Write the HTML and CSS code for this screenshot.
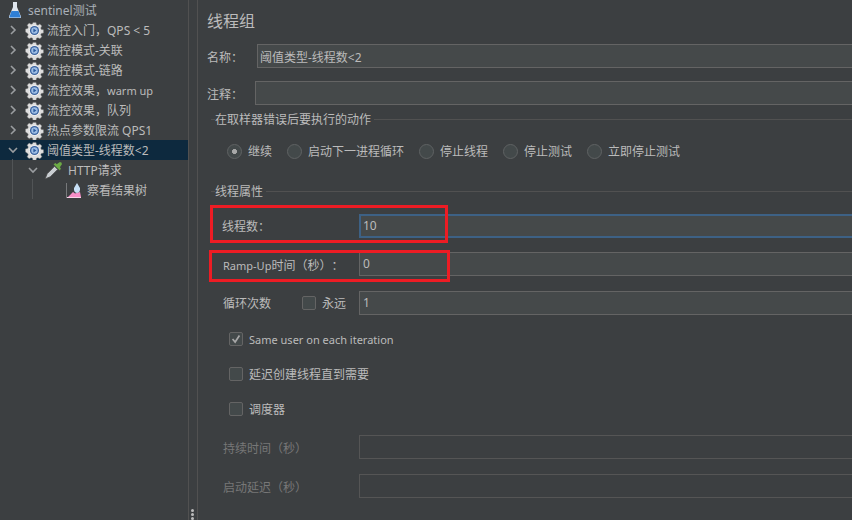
FILE: index.html
```html
<!DOCTYPE html>
<html>
<head>
<meta charset="utf-8">
<title>线程组</title>
<link rel="stylesheet" href="styles.css">
</head>
<body>
<svg class="defs" width="0" height="0">
	<symbol id="gear" viewBox="0 0 20 20">
		<path d="M8.3 1h3.4l.5 2.4 1.6.7 2.1-1.3 2.3 2.3-1.3 2.1.7 1.6 2.4.5v3.4l-2.4.5-.7 1.6 1.3 2.1-2.3 2.3-2.1-1.3-1.6.7-.5 2.4H8.3l-.5-2.4-1.6-.7-2.1 1.3-2.3-2.3 1.3-2.1-.7-1.6L0 11.7V8.3l2.4-.5.7-1.6-1.3-2.1 2.3-2.3 2.1 1.3 1.6-.7z" transform="translate(.5 .5) scale(.95)" fill="#dedede" stroke="#777" stroke-width=".5"/>
		<circle cx="10" cy="10" r="5.600" fill="#f2f2f2"/>
		<circle cx="10" cy="10" r="4.800" fill="#38619e"/>
		<circle cx="10" cy="10" r="3.400" fill="#9dbde4"/>
		<path d="M8.800 8v4l3.200-2z" fill="#2c5c9e"/>
	</symbol>
</svg>
<div class="app">
	<div class="tree">
		<div class="node root">
			<svg class="flask" viewBox="0 0 14 18"><path d="M5 1h4v5l4 9.5q.4 1.5-1 1.5H2q-1.4 0-1-1.500L5 6z" fill="#dfe6ee"/><path d="M3.500 10h7l2 5.500q.3 1-.7 1H2.200q-1 0-.7-1z" fill="#2f7fd6"/></svg>
			<span>sentinel测试</span>
		</div>
		<div class="node"><svg class="arrow" viewBox="0 0 10 10"><path d="M3 1l4 4-4 4"/></svg><svg class="gear"><use href="#gear"/></svg><span>流控入门，QPS &lt; 5</span></div>
		<div class="node"><svg class="arrow" viewBox="0 0 10 10"><path d="M3 1l4 4-4 4"/></svg><svg class="gear"><use href="#gear"/></svg><span>流控模式-关联</span></div>
		<div class="node"><svg class="arrow" viewBox="0 0 10 10"><path d="M3 1l4 4-4 4"/></svg><svg class="gear"><use href="#gear"/></svg><span>流控模式-链路</span></div>
		<div class="node"><svg class="arrow" viewBox="0 0 10 10"><path d="M3 1l4 4-4 4"/></svg><svg class="gear"><use href="#gear"/></svg><span>流控效果，<small>warm up</small></span></div>
		<div class="node"><svg class="arrow" viewBox="0 0 10 10"><path d="M3 1l4 4-4 4"/></svg><svg class="gear"><use href="#gear"/></svg><span>流控效果，队列</span></div>
		<div class="node"><svg class="arrow" viewBox="0 0 10 10"><path d="M3 1l4 4-4 4"/></svg><svg class="gear"><use href="#gear"/></svg><span>热点参数限流 QPS1</span></div>
		<div class="node selected"><svg class="arrow" viewBox="0 0 10 10"><path d="M1 3l4 4 4-4"/></svg><svg class="gear"><use href="#gear"/></svg><span>阈值类型-线程数&lt;2</span></div>
		<div class="node level2"><svg class="arrow" viewBox="0 0 10 10"><path d="M1 3l4 4 4-4"/></svg><svg class="dropper" viewBox="0 0 18 18"><path d="M1 17l2-5 7-7 3 3-7 7z" fill="#c9ced2" stroke="#4a4a4a" stroke-width=".8"/><path d="M9 3l6 6 1-2-1-1 2-3q0-2-2-2l-3 2-1-1z" fill="#6cab45"/></svg><span>HTTP请求</span></div>
		<div class="node level3"><svg class="graph" viewBox="0 0 16 15"><path d="M.5 0v15" stroke="#77797b"/><path d="M2 14l5-5 2 1.500 5-1.500 1 5z" fill="#f78fc8"/><path d="M11 0l3 5q.5 4.500-3 5-3.500-.5-3-5z" fill="#c6dff5"/><path d="M1 14.500h14" stroke="#f9d3e8"/></svg><span>察看结果树</span></div>
		<div class="guide guide1"></div>
		<div class="guide guide2"></div>
	</div>
	<div class="sash"><div class="grip"><i></i><i></i><i></i></div></div>
	<div class="panel">
		<div class="title">线程组</div>
		<div class="row name-row"><label class="name-label">名称：</label><div class="field">阈值类型-线程数&lt;2</div></div>
		<div class="row comment-row"><label class="name-label">注释：</label><div class="field comment"></div></div>
		<div class="legend legend-action"><span>在取样器错误后要执行的动作</span></div>
		<div class="radios">
			<div class="radio on"><i></i><span>继续</span></div>
			<div class="radio"><i></i><span>启动下一进程循环</span></div>
			<div class="radio"><i></i><span>停止线程</span></div>
			<div class="radio"><i></i><span>停止测试</span></div>
			<div class="radio"><i></i><span>立即停止测试</span></div>
		</div>
		<div class="legend legend-props"><span>线程属性</span></div>
		<div class="row threads-row"><label class="prop-label">线程数：</label><div class="field focus">10</div></div>
		<div class="row ramp-row"><label class="prop-label"><small>Ramp-Up</small>时间（秒）：</label><div class="field">0</div></div>
		<div class="row loop-row">
			<label class="loop-label">循环次数</label>
			<div class="check"><i></i><span>永远</span></div>
			<div class="field">1</div>
		</div>
		<div class="check option first"><i class="tick"><svg viewBox="0 0 14 14"><path d="M3 7l3 3.500L11 3"/></svg></i><span><small>Same user on each iteration</small></span></div>
		<div class="check option"><i></i><span>延迟创建线程直到需要</span></div>
		<div class="check option"><i></i><span>调度器</span></div>
		<div class="row off duration-row"><label class="prop-label">持续时间（秒）</label><div class="field"></div></div>
		<div class="row off delay-row"><label class="prop-label">启动延迟（秒）</label><div class="field"></div></div>
		<div class="mark mark-threads"></div>
		<div class="mark mark-ramp"></div>
	</div>
</div>
</body>
</html>
```
FILE: styles.css
```css
html, body {
	margin: 0;
	height: 100%;
	overflow: hidden;
}
body {
	background-color: #3c3f41;
	color: #bbbbbb;
	font-family: "Noto Sans", "Noto Sans CJK SC", sans-serif;
	font-size: 12px;
	text-spacing-trim: space-all;
}
small {
	font-size: 11px;
}
.defs {
	position: absolute;
}
.app {
	display: flex;
	width: 852px;
	height: 520px;
}

/* left tree */
.tree {
	position: relative;
	width: 188px;
	flex: none;
}
.node {
	display: flex;
	align-items: center;
	height: 20px;
	padding-left: 8px;
	white-space: nowrap;
}
.node span {
	margin-left: 3px;
}
.root span {
	margin-left: 6px;
	color: #a9b0b8;
}
.selected {
	background-color: #0d293e;
}
.arrow {
	width: 10px;
	height: 10px;
	margin-right: 4px;
	fill: none;
	stroke: #9a9da0;
	stroke-width: 1.6;
}
.gear {
	width: 19px;
	height: 19px;
	margin-left: 3px;
}
.flask {
	width: 14px;
	height: 18px;
}
.level2 {
	padding-left: 28px;
}
.dropper {
	width: 19px;
	height: 19px;
	margin-left: 2px;
}
.level2 span {
	margin-left: 5px;
}
.level3 {
	padding-left: 66px;
}
.graph {
	width: 16px;
	height: 15px;
}
.level3 span {
	margin-left: 5px;
}
.guide {
	position: absolute;
	width: 1px;
	background-color: #515456;
}
.guide1 {
	left: 12px;
	top: 159px;
	height: 40px;
}
.guide2 {
	left: 32px;
	top: 179px;
	height: 20px;
}

/* divider */
.sash {
	position: relative;
	width: 8px;
	flex: none;
	border-left: 1px solid #515151;
	border-right: 1px solid #515151;
}
.grip {
	position: absolute;
	left: 2px;
	bottom: 0;
	display: flex;
	flex-direction: column;
	gap: 1px;
}
.grip i {
	width: 3px;
	height: 3px;
	border-radius: 50%;
	background-color: #bbbbbb;
}

/* right panel */
.panel {
	position: relative;
	flex: 1;
	padding-left: 9px;
	min-width: 0;
}
.title {
	height: 22px;
	margin-top: 10px;
	margin-bottom: 12px;
	font-size: 16px;
	line-height: 22px;
}
.row {
	display: flex;
	align-items: center;
}
.field {
	flex: 1;
	box-sizing: border-box;
	height: 24px;
	padding-left: 3px;
	border: 1px solid #646464;
	border-right: 0;
	background-color: #45494a;
	line-height: 22px;
}
.name-row {
	margin-top: 11px;
}
.name-label {
	width: 50px;
	flex: none;
	padding-top: 2px;
}
.name-row .field {
	padding-left: 2px;
	line-height: 25px;
}
.comment-row {
	margin-top: 13px;
}
.comment-row .name-label {
	width: 48px;
}
.legend {
	display: flex;
	align-items: center;
	height: 18px;
	margin-left: 4px;
	padding-left: 5px;
}
.legend span {
	padding-right: 3px;
}
.legend::before {
	content: "";
	width: 4px;
	margin-left: -5px;
	border-top: 1px solid #515151;
}
.legend::after {
	content: "";
	flex: 1;
	border-top: 1px solid #515151;
}
.legend-action {
	margin-top: 5px;
}
.radios {
	display: flex;
	height: 18px;
	margin-top: 14px;
	padding-left: 20px;
	gap: 15px;
}
.radio {
	display: flex;
	align-items: center;
	gap: 6px;
}
.radio i {
	box-sizing: border-box;
	display: block;
	width: 15px;
	height: 15px;
	border: 1px solid #5f6263;
	border-radius: 50%;
	background-color: #43494a;
}
.radio.on i {
	background: radial-gradient(circle, #a8a8a8 0 2.200px, #43494a 2.800px);
}
.legend-props {
	margin-top: 22px;
}
.prop-label {
	width: 152px;
	flex: none;
	padding-left: 16px;
	box-sizing: border-box;
}
.threads-row .prop-label {
	padding-left: 15px;
	padding-bottom: 1px;
}
.ramp-row .prop-label, .off .prop-label {
	padding-top: 1px;
}
.threads-row {
	margin-top: 14px;
}
.threads-row .field {
	border: 2px solid #3d6185;
	border-right: 0;
	padding-left: 2px;
	line-height: 19px;
}
.ramp-row {
	margin-top: 14px;
}
.loop-row {
	margin-top: 15px;
	padding-left: 16px;
}
.loop-label {
	width: 79px;
	flex: none;
}
.check {
	display: flex;
	align-items: center;
	gap: 5px;
}
.check i {
	box-sizing: border-box;
	display: block;
	width: 14px;
	height: 14px;
	border: 1px solid #646464;
	border-radius: 2px;
	background-color: #43494a;
}
.loop-row .check {
	width: 57px;
	flex: none;
	gap: 6px;
}
.option {
	height: 18px;
	margin-top: 17px;
	margin-left: 22px;
	gap: 6px;
}
.option.first {
	margin-top: 15px;
}
.tick svg {
	display: block;
	fill: none;
	stroke: #a7a7a7;
	stroke-width: 2;
	width: 12px;
	height: 12px;
}
.off {
	color: #777777;
}
.off .field {
	background-color: #3c3f41;
	border-color: #555555;
}
.duration-row {
	margin-top: 17px;
}
.delay-row {
	margin-top: 15px;
}

/* red boxes drawn over the form */
.mark {
	position: absolute;
	box-sizing: border-box;
	border: 3px solid #ed1c24;
}
.mark-threads {
	left: 12px;
	top: 205px;
	width: 238px;
	height: 38px;
}
.mark-ramp {
	left: 11px;
	top: 250px;
	width: 241px;
	height: 32px;
}
```
